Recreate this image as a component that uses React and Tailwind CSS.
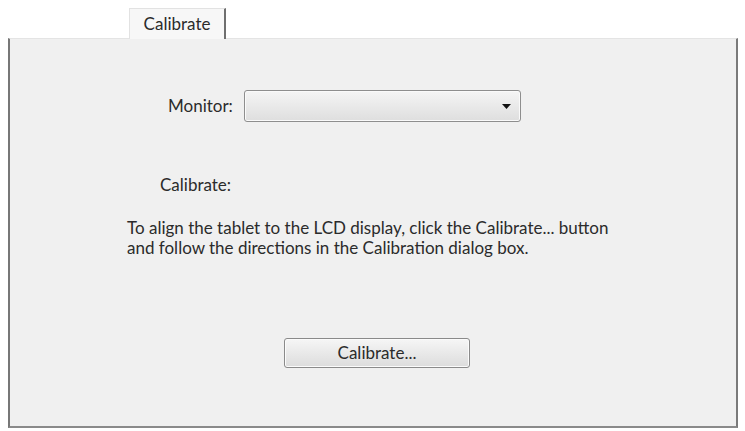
export default function App() {
  const font = { fontFamily: 'Lato, "Open Sans", sans-serif' }
  return (
    <div className="w-[745px] h-[431px] bg-white text-[#2b2b2b] overflow-hidden" style={font}>
      <div className="pt-[8px] pl-[129px] flex">
        <div className="w-[97px] h-[31px] bg-[#f7f7f7] border-l border-t border-[#e2e2e2] border-r-2 border-r-[#6f6f6f] flex items-center justify-center text-[17px] -mb-px relative z-10">
          Calibrate
        </div>
      </div>
      <div className="ml-[8px] w-[730px] h-[390px] bg-[#f0f0f0] border-l-2 border-l-[#777] border-t border-t-[#e4e4e4] border-r-2 border-r-[#7a7a7a] border-b-2 border-b-[#8a8a8a] flex flex-col text-[17px]">
        <div className="flex items-center mt-[51px] ml-[158px]">
          <span className="w-[76px]">Monitor:</span>
          <div className="w-[277px] h-[32px] rounded-[3px] border border-[#8e8e8e] bg-gradient-to-b from-[#f5f5f5] to-[#dedede] flex items-center justify-end pr-[9px] shadow-[inset_0_0_0_1px_#fafafa]">
            <svg width="9" height="5" viewBox="0 0 9 5">
              <path d="M0 0 H9 L4.5 5 Z" fill="#111" />
            </svg>
          </div>
        </div>
        <div className="ml-[150px] mt-[53px] leading-[20px]">Calibrate:</div>
        <p className="ml-[117px] mt-[23px] leading-[20px]">
          To align the tablet to the LCD display, click the Calibrate... button
          <br />
          and follow the directions in the Calibration dialog box.
        </p>
        <div className="ml-[274px] mt-[80px]">
          <button className="w-[186px] h-[30px] rounded-[3px] border border-[#8a8a8a] bg-gradient-to-b from-[#f6f6f6] to-[#dcdcdc] text-[#2b2b2b] shadow-[inset_0_0_0_1px_#fbfbfb]">
            Calibrate...
          </button>
        </div>
      </div>
    </div>
  )
}
